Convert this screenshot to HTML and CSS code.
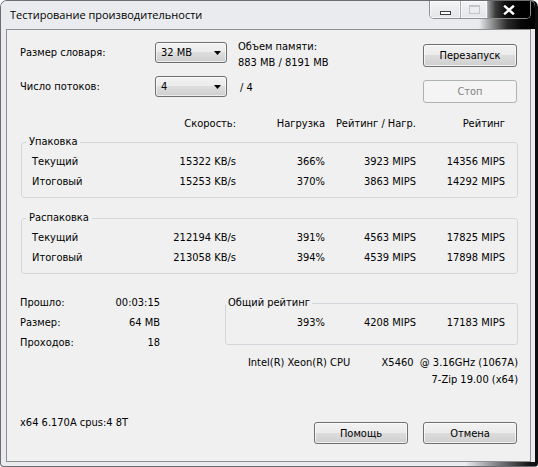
FILE: index.html
```
<!DOCTYPE html>
<html lang="ru">
<head>
<meta charset="utf-8">
<title>Тестирование производительности</title>
<link rel="stylesheet" href="styles.css">
</head>
<body>
<div class="window">
  <div class="titlebar">
    <span class="title">Тестирование производительности</span>
    <div class="caption">
      <span class="cb cb-min"><svg width="11" height="4" viewBox="0 0 11 4"><rect x="0.5" y="0.5" width="10" height="3" fill="#fff" stroke="#3e3e3e"/></svg></span>
      <span class="cb cb-max"><svg width="11" height="9" viewBox="0 0 11 9"><rect x="0.5" y="0.5" width="10" height="8" fill="none" stroke="#c2c4c7"/><line x1="1" y1="1.5" x2="10" y2="1.5" stroke="#c2c4c7"/></svg></span>
      <span class="cb-close"><svg width="12" height="10" viewBox="0 0 12 10"><path d="M2 1.5 L10 8.5 M10 1.5 L2 8.5" stroke="#ffffff" stroke-width="2.4" stroke-linecap="square"/></svg></span>
    </div>
  </div>
  <div class="client">
    <div class="top">
      <div class="opts">
        <span>Размер словаря:</span>
        <div class="combo"><span>32 MB</span><svg width="7" height="4" viewBox="0 0 7 4"><polygon points="0,0 7,0 3.5,4" fill="#000"/></svg></div>
        <span>Число потоков:</span>
        <div class="combo"><span>4</span><svg width="7" height="4" viewBox="0 0 7 4"><polygon points="0,0 7,0 3.5,4" fill="#000"/></svg></div>
      </div>
      <div class="info">
        <div class="mem">Объем памяти:<br>883 MB / 8191 MB</div>
        <div class="threads">/ 4</div>
      </div>
      <div class="actions">
        <button class="btn" type="button">Перезапуск</button>
        <button class="btn" type="button" disabled>Стоп</button>
      </div>
    </div>

    <div class="cols hdr">
      <span></span><span class="r">Скорость:</span><span class="r">Нагрузка</span><span class="r">Рейтинг / Нагр.</span><span class="r">Рейтинг</span>
    </div>

    <fieldset class="group g-pack">
      <legend>Упаковка</legend>
      <div class="cols rows">
        <span>Текущий</span><span class="r">15322 KB/s</span><span class="r">366%</span><span class="r">3923 MIPS</span><span class="r">14356 MIPS</span>
        <span>Итоговый</span><span class="r">15253 KB/s</span><span class="r">370%</span><span class="r">3863 MIPS</span><span class="r">14292 MIPS</span>
      </div>
    </fieldset>

    <fieldset class="group g-unpack">
      <legend>Распаковка</legend>
      <div class="cols rows">
        <span>Текущий</span><span class="r">212194 KB/s</span><span class="r">391%</span><span class="r">4563 MIPS</span><span class="r">17825 MIPS</span>
        <span>Итоговый</span><span class="r">213058 KB/s</span><span class="r">394%</span><span class="r">4539 MIPS</span><span class="r">17898 MIPS</span>
      </div>
    </fieldset>

    <div class="bottom">
      <div class="stats">
        <span>Прошло:</span><span class="r">00:03:15</span>
        <span>Размер:</span><span class="r">64 MB</span>
        <span>Проходов:</span><span class="r">18</span>
      </div>
      <fieldset class="group g-total">
        <legend>Общий рейтинг</legend>
        <div class="total">
          <span class="r">393%</span><span class="r">4208 MIPS</span><span class="r">17183 MIPS</span>
        </div>
      </fieldset>
    </div>

    <div class="sys">
      <div class="cpu">Intel(R) Xeon(R) CPU          X5460  @ 3.16GHz (1067A)</div>
      <div class="ver">7-Zip 19.00 (x64)</div>
    </div>

    <div class="footer">
      <span class="build">x64 6.170A cpus:4 8T</span>
      <div class="fbtns">
        <button class="btn btn-sm" type="button">Помощь</button>
        <button class="btn btn-sm" type="button">Отмена</button>
      </div>
    </div>
  </div>
</div>
</body>
</html>
```
FILE: styles.css
```
html, body {
  margin: 0;
  padding: 0;
  background: #ffffff;
}

.window {
  box-sizing: border-box;
  width: 538px;
  height: 467px;
  border: 1px solid #6b6d70;
  border-right: 3px solid #0d0d0d;
  border-radius: 7px 7px 4px 4px;
  background-color: #e9ebee;
  background-image: linear-gradient(90deg, rgba(0,0,0,0) 87%, #141414 99%);
  background-position: left bottom;
  background-size: 100% 4px;
  background-repeat: no-repeat;
  display: flex;
  flex-direction: column;
  font-family: "DejaVu Sans Condensed", "Liberation Sans", sans-serif;
  font-size: 11px;
  color: #000;
  overflow: hidden;
}

/* title bar */
.titlebar {
  height: 28px;
  flex: none;
  display: flex;
  align-items: flex-start;
  background-color: #e9ebee;
  background-image: linear-gradient(90deg, #e9ebee 0px, #e9ebee 478px, #8a8a8a 492px, #2a2a2a 506px, #080808 520px, #000000 534px);
}

.title {
  font-family: "Open Sans", "Liberation Sans", sans-serif;
  font-size: 11px;
  line-height: 16px;
  padding: 6px 0 0 9px;
  color: #000;
}

.caption {
  display: flex;
  margin-left: auto;
  margin-right: 4px;
  height: 17px;
  border: 1px solid #8c8f93;
  border-top: none;
  border-radius: 0 0 5px 5px;
  overflow: hidden;
}

.cb {
  display: flex;
  align-items: center;
  justify-content: center;
  border-right: 1px solid #a9acb0;
  background: linear-gradient(#f3f4f6, #e3e5e8);
  box-shadow: inset 0 0 0 1px rgba(255,255,255,0.6);
}

.cb-min {
  width: 31px;
  align-items: flex-end;
  padding-bottom: 3px;
  box-sizing: border-box;
}

.cb-max {
  width: 26px;
}

.cb-close {
  width: 42px;
  display: flex;
  align-items: center;
  justify-content: center;
  background-color: #000000;
  background-image: linear-gradient(90deg, #9a9a9a 0%, #3a3a3a 18%, #101010 40%, #000000 70%);
}

/* client area */
.client {
  flex: 1;
  margin: 0 4px 4px 5px;
  border: 1px solid #8d8f92;
  background: #f0f0f0;
  display: flex;
  flex-direction: column;
}

.top {
  display: flex;
  align-items: flex-start;
  padding: 12px 13px 0 13px;
}

.opts {
  display: grid;
  grid-template-columns: 135px 72px;
  grid-auto-rows: 21px;
  row-gap: 13px;
  align-items: center;
}

.combo {
  box-sizing: border-box;
  height: 21px;
  border: 1px solid #707070;
  border-radius: 3px;
  background: linear-gradient(#f2f2f2 0%, #ebebeb 50%, #dddddd 50%, #cfcfcf 100%);
  box-shadow: inset 0 0 0 1px rgba(255,255,255,0.6);
  display: flex;
  align-items: center;
  justify-content: space-between;
  padding: 0 5px 0 5px;
}

.info {
  margin-left: 11px;
  margin-top: -3px;
  display: flex;
  flex-direction: column;
}

.mem {
  line-height: 16px;
}

.threads {
  line-height: 16px;
  margin-top: 9px;
  padding-left: 2px;
}

.actions {
  margin-left: auto;
  padding-top: 2px;
  display: flex;
  flex-direction: column;
  gap: 13px;
}

.btn {
  box-sizing: border-box;
  width: 94px;
  height: 23px;
  border: 1px solid #707070;
  border-radius: 3px;
  background: linear-gradient(#f2f2f2 0%, #ebebeb 50%, #dddddd 50%, #cfcfcf 100%);
  box-shadow: inset 0 0 0 1px rgba(255,255,255,0.7);
  font: inherit;
  color: #000;
  padding: 0;
}

.btn:disabled {
  border-color: #adb2b5;
  background: #f4f4f4;
  box-shadow: none;
  color: #838383;
}

.btn-sm {
  height: 22px;
}

/* columns */
.cols {
  display: grid;
  grid-template-columns: 118px 86px 89px 91px 89px;
  align-items: center;
}

.r {
  text-align: right;
  white-space: nowrap;
}

.hdr {
  margin: 14px 0 0 25px;
  line-height: 14px;
}

.group {
  margin: 0;
  padding: 3px 0 5px 0;
  border: 1px solid #d3d7db;
  border-radius: 3px;
  min-inline-size: 0;
}

.group legend {
  margin-left: 4px;
  padding: 0 3px;
  line-height: 14px;
}

.g-pack {
  margin: 4px 12px 0 14px;
}

.g-unpack {
  margin: 13px 12px 0 14px;
}

.rows {
  margin-left: 10px;
  grid-auto-rows: 20px;
  line-height: 20px;
}

.bottom {
  display: flex;
  align-items: flex-start;
  margin-top: 19px;
  padding-left: 13px;
}

.stats {
  display: grid;
  grid-template-columns: 80px 60px;
  grid-auto-rows: 20px;
  line-height: 20px;
}

.g-total {
  flex: 1;
  margin: 3px 12px 0 65px;
  padding: 3px 0 11px 0;
}

.g-total legend {
  margin-left: 0;
  padding: 0 2px;
}

.total {
  display: grid;
  grid-template-columns: 99px 91px 89px;
  line-height: 20px;
}

.sys {
  margin-top: 1px;
  padding-right: 12px;
  text-align: right;
  line-height: 17px;
}

.cpu {
  white-space: pre;
}

.footer {
  display: flex;
  align-items: flex-start;
  margin-top: 27px;
  padding: 0 13px;
}

.build {
  line-height: 16px;
}

.fbtns {
  margin-left: auto;
  margin-top: 7px;
  display: flex;
  gap: 15px;
}
```
